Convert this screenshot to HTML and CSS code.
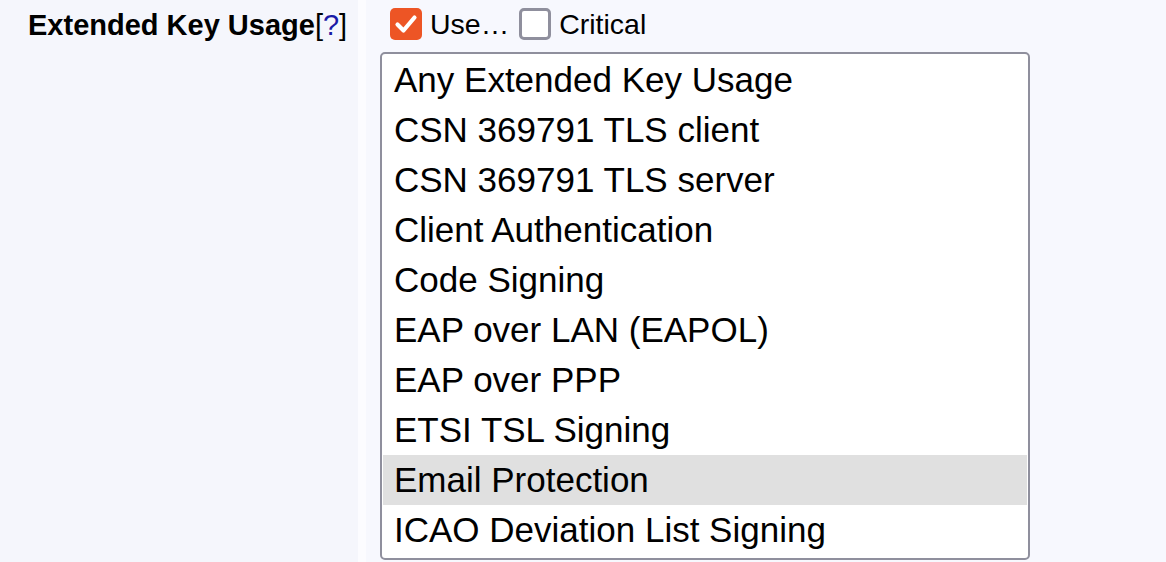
FILE: index.html
```html
<!DOCTYPE html>
<html>
<head>
<meta charset="utf-8">
<link rel="stylesheet" href="styles.css">
</head>
<body>
<div class="row">
  <div class="label-cell">
    <span class="label">Extended Key Usage</span><span class="help">[<a href="#">?</a>]</span>
  </div>
  <div class="field-cell">
    <div class="checks">
      <span class="cb checked"><svg viewBox="0 0 32 32" width="32" height="32"><path d="M7.5 16.5 L13.5 22.5 L24.5 9.5" fill="none" stroke="#fff" stroke-width="4.2" stroke-linecap="round" stroke-linejoin="round"/></svg></span>
      <span class="cb-text">Use…</span>
      <span class="cb"></span>
      <span class="cb-text">Critical</span>
    </div>
    <div class="listbox">
      <div class="opt">Any Extended Key Usage</div>
      <div class="opt">CSN 369791 TLS client</div>
      <div class="opt">CSN 369791 TLS server</div>
      <div class="opt">Client Authentication</div>
      <div class="opt">Code Signing</div>
      <div class="opt">EAP over LAN (EAPOL)</div>
      <div class="opt">EAP over PPP</div>
      <div class="opt">ETSI TSL Signing</div>
      <div class="opt selected">Email Protection</div>
      <div class="opt">ICAO Deviation List Signing</div>
    </div>
  </div>
</div>
</body>
</html>
```

FILE: styles.css
```css
html, body {
  margin: 0;
  padding: 0;
  background: #fcfcff;
  overflow: hidden;
  height: 562px;
}
body {
  font-family: "Liberation Sans", Arial, sans-serif;
  color: #000;
}
.row {
  display: grid;
  grid-template-columns: 358px 1fr;
  column-gap: 8px;
  height: 562px;
}
.label-cell {
  background: #f5f6fc;
  padding: 8px 0 0 28px;
  font-size: 29px;
  line-height: 34px;
}
.label {
  font-weight: bold;
}
.help a {
  color: #1a1aa6;
  text-decoration: none;
}
.field-cell {
  background: #f7f8fe;
  padding: 8px 0 0 14px;
}
.checks {
  display: flex;
  align-items: center;
  height: 32px;
  margin-left: 10px;
  font-size: 28.5px;
}
.cb {
  box-sizing: border-box;
  width: 32px;
  height: 32px;
  border: 3px solid #8f8f9d;
  border-radius: 5px;
  background: #fff;
  flex: none;
}
.cb.checked {
  border: none;
  background: #ed5525;
}
.cb svg {
  display: block;
}
.cb-text {
  margin: 0 9px 0 8px;
  line-height: 32px;
}
.cb-text + .cb {
  margin-left: 1px;
}
.listbox {
  box-sizing: border-box;
  width: 650px;
  height: 508px;
  margin-top: 12px;
  border: 2px solid #8f8f9d;
  border-radius: 5px;
  background: #fff;
  padding: 1px 1px 2px;
  overflow: hidden;
}
.opt {
  height: 50px;
  line-height: 50px;
  padding-left: 11px;
  font-size: 35px;
  white-space: nowrap;
}
.opt.selected {
  background: #e0e0e0;
}
```
